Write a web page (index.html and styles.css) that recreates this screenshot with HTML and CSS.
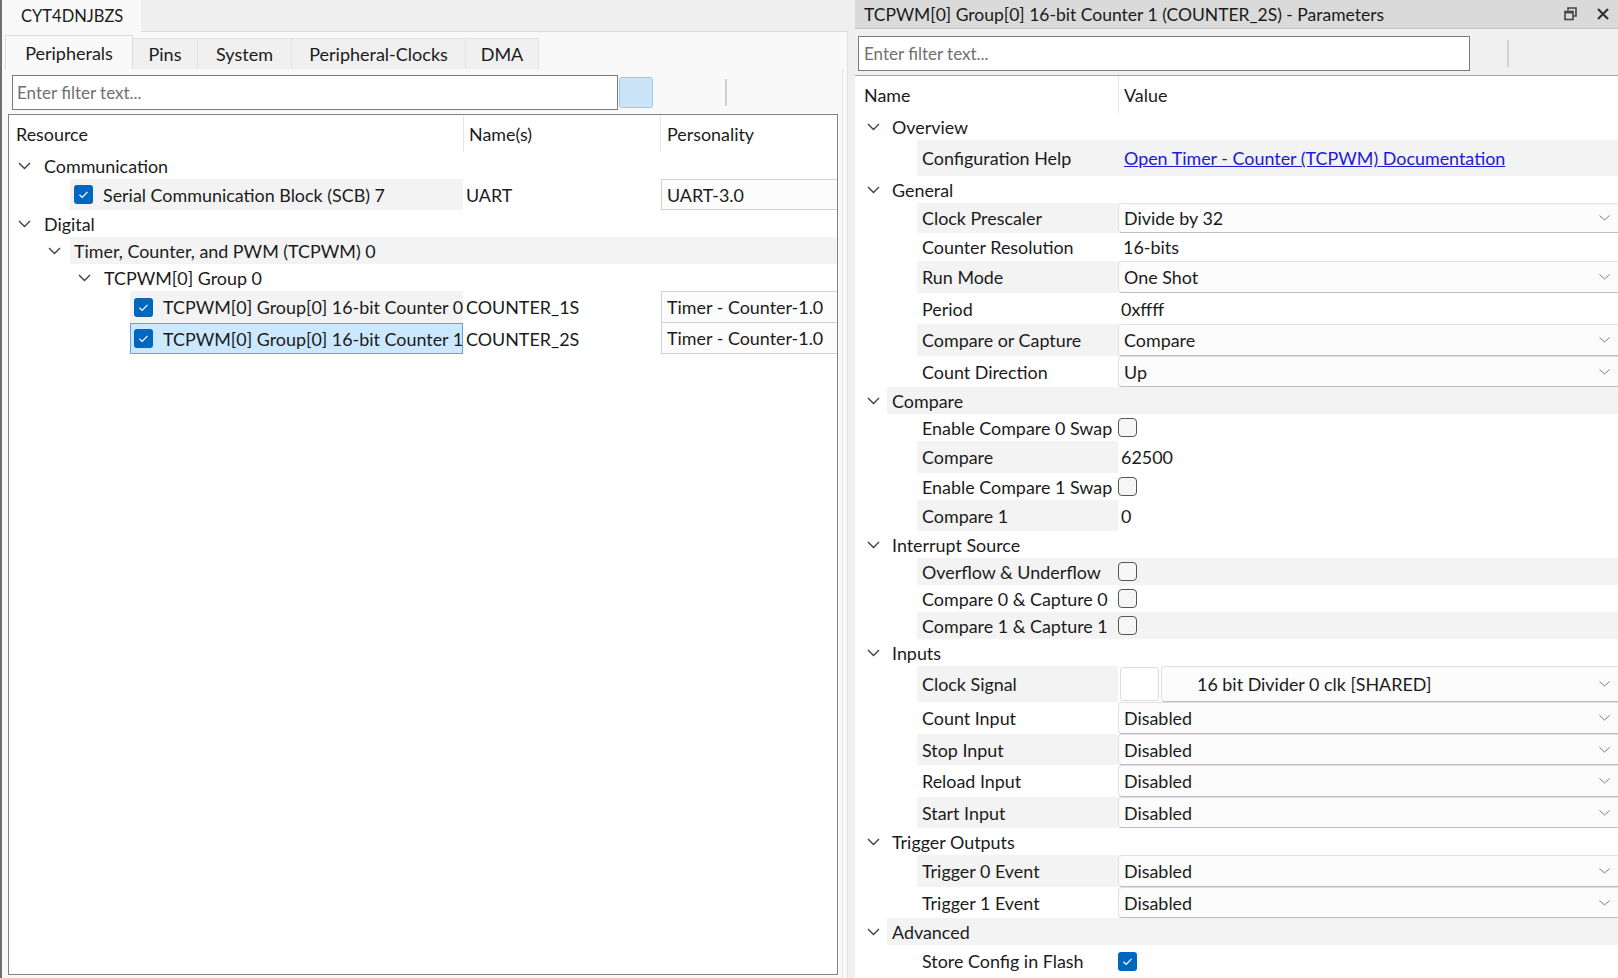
FILE: index.html
```html
<!DOCTYPE html>
<html>
<head>
<meta charset="utf-8">
<title>Device Configurator</title>
<link rel="stylesheet" href="styles.css">
</head>
<body>
<div class="left">
  <div class="doc-tabbar">
    <div class="doc-tab">CYT4DNJBZS</div>
    <div class="doc-fill"></div>
  </div>
  <div class="doc-body">
    <div class="tabs">
      <div class="tab active t-per">Peripherals</div>
      <div class="tab t-pins">Pins</div>
      <div class="tab t-sys">System</div>
      <div class="tab t-pc">Peripheral-Clocks</div>
      <div class="tab t-dma">DMA</div>
    </div>
    <div class="content">
      <div class="filter-row">
        <div class="filter-input">Enter filter text...</div>
        <div class="filter-btn"></div>
        <div class="vsep"></div>
      </div>
      <div class="tree">
        <div class="thead">
          <div class="th1">Resource</div>
          <div class="th2">Name(s)</div>
          <div class="th3">Personality</div>
        </div>

        <div class="trow h27">
          <div class="ind l0"><svg class="chev" width="13" height="8" viewBox="0 0 13 8"><polyline points="1,1 6.5,6.5 12,1"/></svg></div>
          <div class="item">Communication</div>
        </div>

        <div class="trow h31">
          <div class="c1">
            <div class="ind l1"></div>
            <div class="item gray"><span class="cb"><svg width="19" height="19" viewBox="0 0 19 19"><polyline points="5.5,9.8 8.2,12.4 13.5,6.8"/></svg></span>Serial Communication Block (SCB) 7</div>
          </div>
          <div class="c2">UART</div>
          <div class="c3"><div class="pbox">UART-3.0</div></div>
        </div>

        <div class="trow h27">
          <div class="ind l0"><svg class="chev" width="13" height="8" viewBox="0 0 13 8"><polyline points="1,1 6.5,6.5 12,1"/></svg></div>
          <div class="item">Digital</div>
        </div>

        <div class="trow h27">
          <div class="ind l1"><svg class="chev" width="13" height="8" viewBox="0 0 13 8"><polyline points="1,1 6.5,6.5 12,1"/></svg></div>
          <div class="item gray band">Timer, Counter, and PWM (TCPWM) 0</div>
        </div>

        <div class="trow h27">
          <div class="ind l2"><svg class="chev" width="13" height="8" viewBox="0 0 13 8"><polyline points="1,1 6.5,6.5 12,1"/></svg></div>
          <div class="item">TCPWM[0] Group 0</div>
        </div>

        <div class="trow h32">
          <div class="c1">
            <div class="ind l3"></div>
            <div class="item gray"><span class="cb"><svg width="19" height="19" viewBox="0 0 19 19"><polyline points="5.5,9.8 8.2,12.4 13.5,6.8"/></svg></span>TCPWM[0] Group[0] 16-bit Counter 0</div>
          </div>
          <div class="c2">COUNTER_1S</div>
          <div class="c3"><div class="pbox">Timer - Counter-1.0</div></div>
        </div>

        <div class="trow h31">
          <div class="c1">
            <div class="ind l3"></div>
            <div class="item sel"><span class="cb"><svg width="19" height="19" viewBox="0 0 19 19"><polyline points="5.5,9.8 8.2,12.4 13.5,6.8"/></svg></span>TCPWM[0] Group[0] 16-bit Counter 1</div>
          </div>
          <div class="c2">COUNTER_2S</div>
          <div class="c3"><div class="pbox nt">Timer - Counter-1.0</div></div>
        </div>
      </div>
    </div>
  </div>
</div>

<div class="right">
  <div class="rtitle">
    <span>TCPWM[0] Group[0] 16-bit Counter 1 (COUNTER_2S) - Parameters</span>
    <div class="ricons">
      <svg width="13" height="14" viewBox="0 0 13 14"><path d="M4 3.5V1h8v8H9.5" fill="none" stroke="#444" stroke-width="1.6"/><rect x="1" y="4.5" width="8" height="8" fill="none" stroke="#444" stroke-width="1.6"/><rect x="1" y="4" width="8" height="2.4" fill="#444"/></svg>
      <svg width="12" height="12" viewBox="0 0 12 12"><path d="M1 1L11 11M11 1L1 11" stroke="#333" stroke-width="2.2"/></svg>
    </div>
  </div>
  <div class="rfilter">
    <div class="rinput">Enter filter text...</div>
    <div class="rsep"></div>
  </div>
  <div class="ptable">
    <div class="phead">
      <div class="pn">Name</div>
      <div class="pv">Value</div>
    </div>

    <div class="grow h27"><div class="gind"><svg class="chev" width="13" height="8" viewBox="0 0 13 8"><polyline points="1,1 6.5,6.5 12,1"/></svg></div><div class="gtext">Overview</div></div>
    <div class="prow h36 altfull"><div class="pind"></div><div class="plabel">Configuration Help</div><div class="pval"><span class="link">Open Timer - Counter (TCPWM) Documentation</span></div></div>

    <div class="grow h27"><div class="gind"><svg class="chev" width="13" height="8" viewBox="0 0 13 8"><polyline points="1,1 6.5,6.5 12,1"/></svg></div><div class="gtext">General</div></div>
    <div class="prow h30 alt"><div class="pind"></div><div class="plabel">Clock Prescaler</div><div class="pval"><div class="dd"><span>Divide by 32</span><svg class="ddc" width="11" height="6" viewBox="0 0 11 6"><polyline points="0.5,0.5 5.5,5 10.5,0.5"/></svg></div></div></div>
    <div class="prow h28"><div class="pind"></div><div class="plabel">Counter Resolution</div><div class="pval"><span class="vt">16-bits</span></div></div>
    <div class="prow h32 alt"><div class="pind"></div><div class="plabel">Run Mode</div><div class="pval"><div class="dd"><span>One Shot</span><svg class="ddc" width="11" height="6" viewBox="0 0 11 6"><polyline points="0.5,0.5 5.5,5 10.5,0.5"/></svg></div></div></div>
    <div class="prow h31"><div class="pind"></div><div class="plabel">Period</div><div class="pval"><span class="vt v2">0xffff</span></div></div>
    <div class="prow h32 alt"><div class="pind"></div><div class="plabel">Compare or Capture</div><div class="pval"><div class="dd"><span>Compare</span><svg class="ddc" width="11" height="6" viewBox="0 0 11 6"><polyline points="0.5,0.5 5.5,5 10.5,0.5"/></svg></div></div></div>
    <div class="prow h31"><div class="pind"></div><div class="plabel">Count Direction</div><div class="pval"><div class="dd"><span>Up</span><svg class="ddc" width="11" height="6" viewBox="0 0 11 6"><polyline points="0.5,0.5 5.5,5 10.5,0.5"/></svg></div></div></div>

    <div class="grow h27 alt"><div class="gind"><svg class="chev" width="13" height="8" viewBox="0 0 13 8"><polyline points="1,1 6.5,6.5 12,1"/></svg></div><div class="gtext">Compare</div></div>
    <div class="prow h27"><div class="pind"></div><div class="plabel">Enable Compare 0 Swap</div><div class="pval"><span class="ecb"></span></div></div>
    <div class="prow h32 alt"><div class="pind"></div><div class="plabel">Compare</div><div class="pval"><span class="vt v2">62500</span></div></div>
    <div class="prow h27"><div class="pind"></div><div class="plabel">Enable Compare 1 Swap</div><div class="pval"><span class="ecb"></span></div></div>
    <div class="prow h31 alt"><div class="pind"></div><div class="plabel">Compare 1</div><div class="pval"><span class="vt v2">0</span></div></div>

    <div class="grow h27"><div class="gind"><svg class="chev" width="13" height="8" viewBox="0 0 13 8"><polyline points="1,1 6.5,6.5 12,1"/></svg></div><div class="gtext">Interrupt Source</div></div>
    <div class="prow h27 altfull"><div class="pind"></div><div class="plabel">Overflow &amp; Underflow</div><div class="pval"><span class="ecb"></span></div></div>
    <div class="prow h27"><div class="pind"></div><div class="plabel">Compare 0 &amp; Capture 0</div><div class="pval"><span class="ecb"></span></div></div>
    <div class="prow h27 altfull"><div class="pind"></div><div class="plabel">Compare 1 &amp; Capture 1</div><div class="pval"><span class="ecb"></span></div></div>

    <div class="grow h27"><div class="gind"><svg class="chev" width="13" height="8" viewBox="0 0 13 8"><polyline points="1,1 6.5,6.5 12,1"/></svg></div><div class="gtext">Inputs</div></div>
    <div class="prow h36 alt"><div class="pind"></div><div class="plabel">Clock Signal</div><div class="pval"><span class="clkbox"></span><div class="dd clk"><span>16 bit Divider 0 clk [SHARED]</span><svg class="ddc" width="11" height="6" viewBox="0 0 11 6"><polyline points="0.5,0.5 5.5,5 10.5,0.5"/></svg></div></div></div>
    <div class="prow h32"><div class="pind"></div><div class="plabel">Count Input</div><div class="pval"><div class="dd"><span>Disabled</span><svg class="ddc" width="11" height="6" viewBox="0 0 11 6"><polyline points="0.5,0.5 5.5,5 10.5,0.5"/></svg></div></div></div>
    <div class="prow h31 alt"><div class="pind"></div><div class="plabel">Stop Input</div><div class="pval"><div class="dd"><span>Disabled</span><svg class="ddc" width="11" height="6" viewBox="0 0 11 6"><polyline points="0.5,0.5 5.5,5 10.5,0.5"/></svg></div></div></div>
    <div class="prow h32"><div class="pind"></div><div class="plabel">Reload Input</div><div class="pval"><div class="dd"><span>Disabled</span><svg class="ddc" width="11" height="6" viewBox="0 0 11 6"><polyline points="0.5,0.5 5.5,5 10.5,0.5"/></svg></div></div></div>
    <div class="prow h31 alt"><div class="pind"></div><div class="plabel">Start Input</div><div class="pval"><div class="dd"><span>Disabled</span><svg class="ddc" width="11" height="6" viewBox="0 0 11 6"><polyline points="0.5,0.5 5.5,5 10.5,0.5"/></svg></div></div></div>

    <div class="grow h27"><div class="gind"><svg class="chev" width="13" height="8" viewBox="0 0 13 8"><polyline points="1,1 6.5,6.5 12,1"/></svg></div><div class="gtext">Trigger Outputs</div></div>
    <div class="prow h32 alt"><div class="pind"></div><div class="plabel">Trigger 0 Event</div><div class="pval"><div class="dd"><span>Disabled</span><svg class="ddc" width="11" height="6" viewBox="0 0 11 6"><polyline points="0.5,0.5 5.5,5 10.5,0.5"/></svg></div></div></div>
    <div class="prow h31"><div class="pind"></div><div class="plabel">Trigger 1 Event</div><div class="pval"><div class="dd"><span>Disabled</span><svg class="ddc" width="11" height="6" viewBox="0 0 11 6"><polyline points="0.5,0.5 5.5,5 10.5,0.5"/></svg></div></div></div>

    <div class="grow h27 alt"><div class="gind"><svg class="chev" width="13" height="8" viewBox="0 0 13 8"><polyline points="1,1 6.5,6.5 12,1"/></svg></div><div class="gtext">Advanced</div></div>
    <div class="prow h32"><div class="pind"></div><div class="plabel">Store Config in Flash</div><div class="pval"><span class="cb"><svg width="19" height="19" viewBox="0 0 19 19"><polyline points="5.5,9.8 8.2,12.4 13.5,6.8"/></svg></span></div></div>
  </div>
</div>
</body>
</html>
```

FILE: styles.css
```css
* { box-sizing: border-box; margin: 0; padding: 0; }
html, body { width: 1618px; height: 978px; overflow: hidden; }
body {
  display: flex;
  background: #efefef;
  font-family: Lato, "Liberation Sans", sans-serif;
  font-size: 17.9px;
  color: #1b1b1b;
}

/* ---------- left side ---------- */
.left {
  width: 848px;
  height: 978px;
  display: flex;
  flex-direction: column;
  border-left: 2px solid #6f6f6f;
  flex: none;
}
.doc-tabbar { height: 32px; display: flex; flex: none; }
.doc-tab {
  width: 139px;
  background: #f9f9f9;
  padding-left: 19px;
  line-height: 32px;
  font-size: 16.5px;
}
.doc-fill { flex: 1; border-bottom: 1px solid #dcdcdc; }
.doc-body {
  flex: 1;
  min-height: 0;
  display: flex;
  flex-direction: column;
  background: #f9f9f9;
  border-right: 1px solid #e2e2e2;
}
.tabs { height: 37px; flex: none; display: flex; align-items: flex-end; padding-left: 3px; }
.tab {
  height: 31px;
  background: #f0f0f0;
  border: 1px solid #e2e2e2;
  border-bottom: none;
  border-left: none;
  display: flex;
  align-items: center;
  justify-content: center;
  font-size: 18px;
}
.tab.active { height: 34px; background: #f9f9f9; border: 1px solid #dcdcdc; border-bottom: none; }
.t-per { width: 128px; }
.t-pins { width: 65px; }
.t-sys { width: 94px; }
.t-pc { width: 174px; }
.t-dma { width: 73px; }

.content {
  flex: 1;
  min-height: 0;
  display: flex;
  flex-direction: column;
  margin-right: 4px;
  border-right: 1px solid #e4e4e4;
}
.filter-row { height: 45px; flex: none; display: flex; align-items: flex-start; padding: 6px 0 0 10px; }
.filter-input {
  width: 606px;
  height: 35px;
  border: 1px solid #7a7a7a;
  background: #fff;
  color: #707070;
  font-size: 17px;
  padding-left: 4px;
  display: flex;
  align-items: center;
}
.filter-btn {
  width: 34px;
  height: 31px;
  margin: 2px 0 0 1px;
  background: #cce4f7;
  border: 1px solid #9bcaf0;
  border-radius: 3px;
}
.vsep { width: 2px; height: 27px; background: #cfcfcf; margin: 4px 0 0 72px; }

.tree {
  flex: 1;
  min-height: 0;
  margin: 0 4px 3px 6px;
  border: 1px solid #828282;
  background: #fff;
}
.thead { height: 37px; display: flex; }
.th1 { width: 454px; padding-left: 7px; display: flex; align-items: center; }
.th2 { width: 197px; border-left: 1px solid #e6e6e6; padding-left: 5px; display: flex; align-items: center; }
.th3 { flex: 1; border-left: 1px solid #e6e6e6; padding-left: 6px; display: flex; align-items: center; }

.trow { display: flex; }
.h27 { height: 27px; }
.h28 { height: 28px; }
.h30 { height: 30px; }
.h31 { height: 31px; }
.h32 { height: 32px; }
.h36 { height: 36px; }

.c1 { width: 454px; display: flex; flex: none; }
.ind { flex: none; display: flex; align-items: center; }
.l0 { width: 31px; padding-left: 9px; }
.l1 { width: 61px; padding-left: 39px; }
.l2 { width: 91px; padding-left: 69px; }
.l3 { width: 121px; padding-left: 99px; }
.item { flex: 1; display: flex; align-items: center; padding-left: 4px; white-space: nowrap; overflow: hidden; }
.item.gray { background: #f3f3f3; }
.item.sel { background: #cce8ff; border: 1px solid #5ca5e6; padding-left: 3px; }
.c2 { width: 197px; flex: none; display: flex; align-items: center; padding-left: 3px; }
.c3 { flex: 1; display: flex; padding-left: 1px; }
.pbox {
  flex: 1;
  border: 1px solid #d2d2d2;
  border-right: none;
  background: #fcfcfc;
  padding-left: 5px;
  display: flex;
  align-items: center;
}
.pbox.nt { border-top: none; }

.chev { display: block; }
.chev polyline { fill: none; stroke: #404040; stroke-width: 1.4; }

.cb {
  width: 19px;
  height: 19px;
  border-radius: 3px;
  background: #0067c0;
  margin-right: 10px;
  flex: none;
  display: block;
}
.cb svg { display: block; }
.cb polyline { fill: none; stroke: #fff; stroke-width: 1.2; }

/* ---------- right side ---------- */
.right {
  flex: 1;
  margin-left: 7px;
  display: flex;
  flex-direction: column;
  background: #fff;
  min-width: 0;
}
.rtitle {
  height: 29px;
  flex: none;
  background: #dadada;
  border-bottom: 1px solid #c6c6c6;
  display: flex;
  align-items: center;
  padding-left: 9px;
  font-size: 17.5px;
  white-space: nowrap;
}
.ricons { margin-left: auto; display: flex; align-items: center; gap: 20px; padding-right: 9px; }
.ricons svg { display: block; }
.rfilter {
  height: 47px;
  flex: none;
  background: #f0f0f0;
  border-bottom: 1px solid #a3a3a3;
  display: flex;
  align-items: flex-start;
  padding: 7px 0 0 3px;
}
.rinput {
  width: 612px;
  height: 35px;
  border: 1px solid #7a7a7a;
  background: #fff;
  color: #707070;
  font-size: 17px;
  padding-left: 5px;
  display: flex;
  align-items: center;
}
.rsep { width: 2px; height: 27px; background: #d2d2d2; margin: 4px 0 0 37px; }

.ptable { flex: 1; background: #fff; }
.phead { height: 37px; display: flex; }
.pn { width: 263px; padding-left: 9px; display: flex; align-items: center; }
.pv { flex: 1; border-left: 1px solid #e6e6e6; padding-left: 5px; display: flex; align-items: center; }

.grow { display: flex; }
.gind { width: 32px; flex: none; padding-left: 12px; display: flex; align-items: center; }
.gtext { flex: 1; padding-left: 5px; display: flex; align-items: center; }
.grow.alt .gtext { background: #f3f3f3; }

.prow { display: flex; }
.pind { width: 62px; flex: none; }
.plabel { width: 201px; flex: none; padding-left: 5px; display: flex; align-items: center; white-space: nowrap; }
.pval { flex: 1; display: flex; align-items: center; min-width: 0; }
.prow.alt .plabel, .prow.altfull .plabel, .prow.altfull .pval { background: #f3f3f3; }

.link { color: #1a1ad8; text-decoration: underline; padding-left: 6px; }
.vt { padding-left: 5px; }
.vt.v2 { padding-left: 3px; }

.dd {
  flex: 1;
  align-self: stretch;
  display: flex;
  align-items: center;
  justify-content: space-between;
  background: #fcfcfc;
  border: 1px solid #e0e0e0;
  border-bottom-color: #bdbdbd;
  border-right: none;
  border-radius: 4px 0 0 4px;
  padding: 0 8px 0 5px;
}
.dd.clk { margin-left: 2px; padding-left: 35px; }
.ddc { display: block; }
.ddc polyline { fill: none; stroke: #7a7a7a; stroke-width: 1; }
.clkbox {
  width: 39px;
  align-self: stretch;
  margin: 1px 0 1px 2px;
  background: #fff;
  border: 1px solid #dcdcdc;
  border-radius: 3px;
}
.ecb {
  width: 19px;
  height: 19px;
  border: 1px solid #555;
  border-radius: 4px;
  background: #f6f6f6;
}
.prow .cb { margin-right: 0; }
```
